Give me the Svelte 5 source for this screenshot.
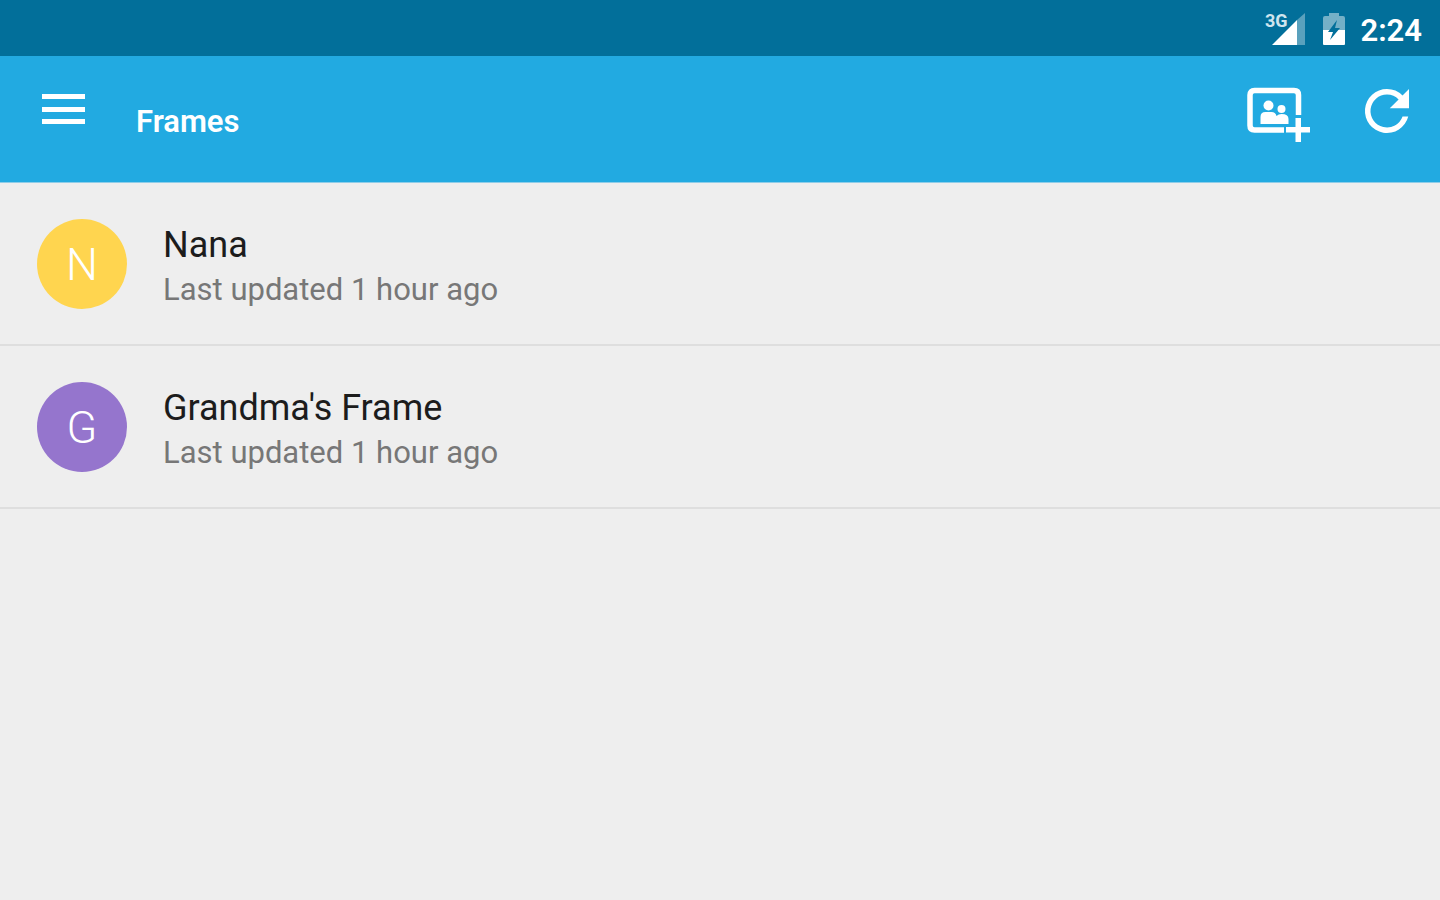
<script>
  const frames = [
    { name: 'Nana', initial: 'N', color: '#ffd54f', updated: 'Last updated 1 hour ago' },
    { name: "Grandma's Frame", initial: 'G', color: '#9575cd', updated: 'Last updated 1 hour ago' }
  ];
</script>

<div class="screen">
  <div class="status">
    <svg class="signal" width="46" height="44" viewBox="-4 -4 46 44" aria-hidden="true">
      <path d="M32 8 40 1v32h-8z" fill="#fff" opacity=".35" />
      <path d="M7 33 32 8v25z" fill="#fff" />
      <text x="0" y="15">3G</text>
    </svg>
    <svg class="battery" width="24" height="36" viewBox="0 0 24 36" aria-hidden="true">
      <path d="M7 1h10v3h4q2 0 2 2v12H1V6q0-2 2-2h4z" fill="#fff" opacity=".45" />
      <path d="M1 18h22v14q0 1-1 1H2q-1 0-1-1z" fill="#fff" />
      <path d="M15 8 6 20h5l-3 8 10-12h-5z" fill="#026f9a" />
    </svg>
    <time>2:24</time>
  </div>

  <header>
    <button class="menu" aria-label="Open menu">
      <svg width="44" height="32" viewBox="0 0 44 32" fill="#fff">
        <path d="M0 0h43v5H0zM0 13h43v5H0zM0 25h43v5H0z" />
      </svg>
    </button>
    <h1>Frames</h1>
    <div class="actions">
      <button aria-label="Add frame">
        <svg width="66" height="66" viewBox="0 0 66 66">
          <path d="M52.5 37V17q0-4.5-4.500-4.500H8.500Q4 12.500 4 17v30.500q0 4.500 4.500 4.500H38" fill="none" stroke="#fff" stroke-width="5.5" />
          <g fill="#fff">
            <circle cx="22.5" cy="27.5" r="5" />
            <circle cx="35.5" cy="31" r="4" />
            <path d="M14.5 46v-7q0-5 5-5h6q4 0 5 4 2-2 5-2 7 0 7 5v5z" />
            <path d="M49.5 40H55v9h9v5.500h-9V64h-5.500v-9.500H40V49h9.500z" />
          </g>
        </svg>
      </button>
      <button aria-label="Refresh">
        <svg width="66" height="66" viewBox="0 0 24 24" fill="#fff">
          <path d="M17.65 6.35A7.96 7.96 0 0 0 12 4a8 8 0 1 0 7.73 10h-2.08A6 6 0 1 1 12 6c1.66 0 3.14.69 4.22 1.78L13 11h7V4z" />
        </svg>
      </button>
    </div>
  </header>

  <main>
    <ul>
      {#each frames as frame}
        <li>
          <a href="#frame-{frame.initial}">
            <span class="avatar" style="background: {frame.color}" aria-hidden="true">{frame.initial}</span>
            <span class="info">
              <span class="name">{frame.name}</span>
              <span class="updated">{frame.updated}</span>
            </span>
          </a>
        </li>
      {/each}
    </ul>
  </main>
</div>

<style>
  :global(body) {
    margin: 0;
    background: #eee;
  }
  .screen {
    min-height: 100vh;
    font-family: Roboto, "Noto Sans", sans-serif;
    background: #eee;
  }
  .status {
    display: flex;
    justify-content: flex-end;
    align-items: center;
    height: 56px;
    box-sizing: border-box;
    padding: 4px 18px 0 0;
    background: #026f9a;
    color: #fff;
  }
  .status text {
    font-size: 18px;
    font-weight: 700;
    fill: #cfe5ee;
  }
  .signal {
    margin-right: 15px;
  }
  .battery {
    margin-right: 14px;
  }
  time {
    padding-top: 2px;
    font-size: 31px;
    font-weight: 600;
    line-height: 40px;
  }
  header {
    display: flex;
    align-items: flex-start;
    height: 127px;
    box-sizing: border-box;
    padding: 22px 20px 0 42px;
    background: #22aae1;
    color: #fff;
    border-bottom: 1px solid #8fcde8;
  }
  button {
    display: flex;
    padding: 0;
    border: 0;
    background: none;
    cursor: pointer;
  }
  .menu {
    padding-top: 16px;
  }
  h1 {
    margin: 23px 0 0 50px;
    font-size: 31px;
    font-weight: 600;
    line-height: 42px;
  }
  .actions {
    display: flex;
    gap: 42px;
    margin-left: auto;
  }
  ul {
    margin: 0;
    padding: 0;
    list-style: none;
  }
  li {
    border-bottom: 2px solid #dedede;
  }
  a {
    display: flex;
    align-items: flex-start;
    gap: 36px;
    padding: 36px 37px 31px;
    color: inherit;
    text-decoration: none;
  }
  .avatar {
    display: grid;
    place-items: center;
    flex: none;
    width: 90px;
    height: 90px;
    border-radius: 50%;
    color: #fff;
    font-size: 45px;
    font-weight: 300;
  }
  .info {
    display: flex;
    flex-direction: column;
    padding-top: 4px;
  }
  .name {
    color: #1c1c1c;
    font-size: 36px;
    line-height: 44px;
  }
  .updated {
    color: #777;
    font-size: 31px;
    line-height: 46px;
  }
</style>
